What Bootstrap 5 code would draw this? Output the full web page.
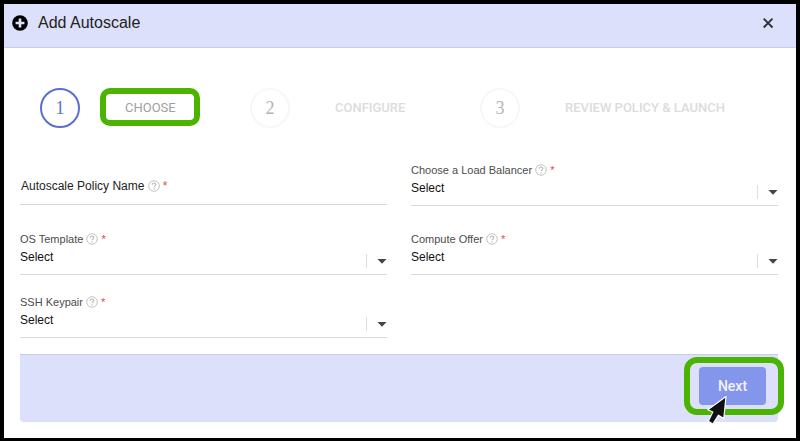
<!DOCTYPE html>
<html lang="en">
<head>
<meta charset="utf-8">
<meta name="viewport" content="width=device-width, initial-scale=1">
<title>Add Autoscale</title>
<link href="https://cdn.jsdelivr.net/npm/bootstrap@5.3.0/dist/css/bootstrap.min.css" rel="stylesheet">
<style>
  body { font-family: "Liberation Sans", Arial, sans-serif; background: #000; }
  .frame { border: 4px solid #000; border-bottom-width: 3px; min-height: 100vh; background: #fff; }
  .dlg-head { background: #dde0fa; border-bottom: 1px solid #c9cce6; padding: 0 20px 0 8px; height: 44px; }
  .dlg-head h1 { font-size: 16px; line-height: 20px; color: #222; padding: 0 0 5px 10px; }
  .dlg-head svg { margin-bottom: 6px; }
  .close-btn { line-height: 0; }
  .steps { padding: 40px 16px 0 36px; font-family: Roboto, sans-serif; font-weight: 500; }
  .num { width: 40px; height: 40px; border: 2px solid #f7f7f7; color: #b4b4b4; font: 18px/1 "Liberation Serif", serif; }
  .step-label { font-size: 13px; line-height: 20px; color: #dcdcdc; margin-left: 45px; white-space: nowrap; }
  .step-item { min-width: 230px; }
  .step-item.active { min-width: 210px; }
  .active .num { border-color: #5a6fd0; color: #5a6fd0; }
  .active .step-label { color: #a0a0a0; font-weight: 400; }
  .hl::after { content: ""; position: absolute; border: 6px solid #4ab400; pointer-events: none; }
  .step-hl::after { inset: -10px -24px -8px -25px; border-radius: 10px; }
  .next-hl::after { inset: -10px -18px -10px -15px; border-radius: 13px; }
  .fields { display: grid; grid-template-columns: 1fr 1fr; column-gap: 24px; padding: 34px 18px 0 16px; }
  .field { display: flex; flex-direction: column; justify-content: flex-end; height: 63px; }
  .field.first { height: 44px; margin-bottom: 6px; }
  .field label { font-size: 11px; line-height: 16px; color: #4c4c4c; }
  .field .name-label { font-size: 12px; color: #222; padding-left: 1px; }
  .q { width: 12px; height: 12px; margin-top: -2px; }
  .req { color: #e04a55; margin-left: 3px; }
  .line { border-bottom: 1px solid #d9d9d9; }
  .line select { appearance: none; border: 0; background: none; padding: 0 0 7px; font-size: 12px; line-height: 20px; height: 27px; color: #111; }
  .line input { border: 0; background: none; height: 16px; min-width: 0; font-size: 12px; }
  .name-line { padding-bottom: 10px; margin-bottom: 1px; }
  .sep { width: 1px; height: 14px; background: #ddd; margin: 7px 10px 0 0; }
  .caret { width: 10px; height: 5px; margin-top: 12px; }
  .dlg-foot { margin: 16px 18px 0 16px; padding: 12px; background: #dde0fa; border-top: 1px solid #c9cce0; border-radius: 0 0 4px 4px; height: 68px; }
  .next-btn { background: #8496ec; color: #f1f3ff; font: 500 14px/20px Roboto, sans-serif; padding: 9px 18px; border: 0; border-radius: 4px; width: 67px; height: 38px; }
  .cursor { left: 8px; top: 28px; z-index: 2; pointer-events: none; }
</style>
<script src="https://cdn.jsdelivr.net/npm/bootstrap@5.3.0/dist/js/bootstrap.bundle.min.js"></script>
</head>
<body>
<svg class="d-none" aria-hidden="true">
  <symbol id="help" viewBox="0 0 12 12"><circle cx="6" cy="6" r="5.3" fill="none" stroke="#c2c2c2"/><path d="M4.3 4.7c.1-2.2 3.5-2.2 3.5-.1C7.8 5.8 6.1 5.9 6.1 7.2M6.1 8.2v1.2" fill="none" stroke="#b5b5b5" stroke-width="1.1"/></symbol>
  <symbol id="down" viewBox="0 0 10 5"><path d="M.5 0h9L5 4.7z" fill="#454545"/></symbol>
</svg>
<main class="frame">
  <header class="dlg-head d-flex align-items-center">
    <svg width="16" height="16" viewBox="0 0 16 16" aria-hidden="true"><circle cx="8" cy="8" r="7.8" fill="#000"/><path d="M8 3.6v8.8M3.6 8h8.8" stroke="#dde0fa" stroke-width="2.6"/></svg>
    <h1 class="m-0 flex-fill fw-normal">Add Autoscale</h1>
    <button type="button" class="close-btn btn p-0 border-0" aria-label="Close"><svg width="16" height="16" viewBox="0 0 16 16"><path d="M3.7 3.7l8.8 8.8M12.5 3.7l-8.8 8.8" stroke="#30303c" stroke-width="1.9"/></svg></button>
  </header>
  <ol class="steps list-unstyled d-flex m-0">
    <li class="step-item active d-flex align-items-center"><span class="num rounded-circle d-flex align-items-center justify-content-center flex-shrink-0">1</span><span class="step-label hl step-hl position-relative">CHOOSE</span></li>
    <li class="step-item d-flex align-items-center"><span class="num rounded-circle d-flex align-items-center justify-content-center flex-shrink-0">2</span><span class="step-label">CONFIGURE</span></li>
    <li class="step-item d-flex align-items-center"><span class="num rounded-circle d-flex align-items-center justify-content-center flex-shrink-0">3</span><span class="step-label">REVIEW POLICY &amp; LAUNCH</span></li>
  </ol>
  <form>
    <div class="fields">
      <div class="field first">
        <div class="line name-line d-flex"><label class="name-label" for="pname">Autoscale Policy Name <svg class="q"><use href="#help"/></svg><span class="req">*</span></label><input id="pname" type="text" class="flex-fill"></div>
      </div>
      <div class="field first">
        <label for="lb">Choose a Load Balancer <svg class="q"><use href="#help"/></svg><span class="req">*</span></label>
        <div class="line d-flex"><select id="lb" class="flex-fill"><option>Select</option></select><span class="sep"></span><svg class="caret" aria-hidden="true"><use href="#down"/></svg></div>
      </div>
      <div class="field">
        <label for="os">OS Template <svg class="q"><use href="#help"/></svg><span class="req">*</span></label>
        <div class="line d-flex"><select id="os" class="flex-fill"><option>Select</option></select><span class="sep"></span><svg class="caret" aria-hidden="true"><use href="#down"/></svg></div>
      </div>
      <div class="field">
        <label for="co">Compute Offer <svg class="q"><use href="#help"/></svg><span class="req">*</span></label>
        <div class="line d-flex"><select id="co" class="flex-fill"><option>Select</option></select><span class="sep"></span><svg class="caret" aria-hidden="true"><use href="#down"/></svg></div>
      </div>
      <div class="field">
        <label for="ssh">SSH Keypair <svg class="q"><use href="#help"/></svg><span class="req">*</span></label>
        <div class="line d-flex"><select id="ssh" class="flex-fill"><option>Select</option></select><span class="sep"></span><svg class="caret" aria-hidden="true"><use href="#down"/></svg></div>
      </div>
    </div>
    <footer class="dlg-foot d-flex justify-content-end align-items-start">
      <div class="hl next-hl position-relative d-flex">
        <button type="button" class="next-btn btn">Next</button>
        <svg class="cursor position-absolute" width="22" height="34" viewBox="0 0 22 34" aria-hidden="true"><path d="M19 1.5L.8 14.8l5 2.2L1.3 26.2 5.8 29l5.7-8.8 5.3 3.3z" fill="#111" stroke="#fff" stroke-width="1.2" stroke-linejoin="round"/></svg>
      </div>
    </footer>
  </form>
</main>
</body>
</html>
